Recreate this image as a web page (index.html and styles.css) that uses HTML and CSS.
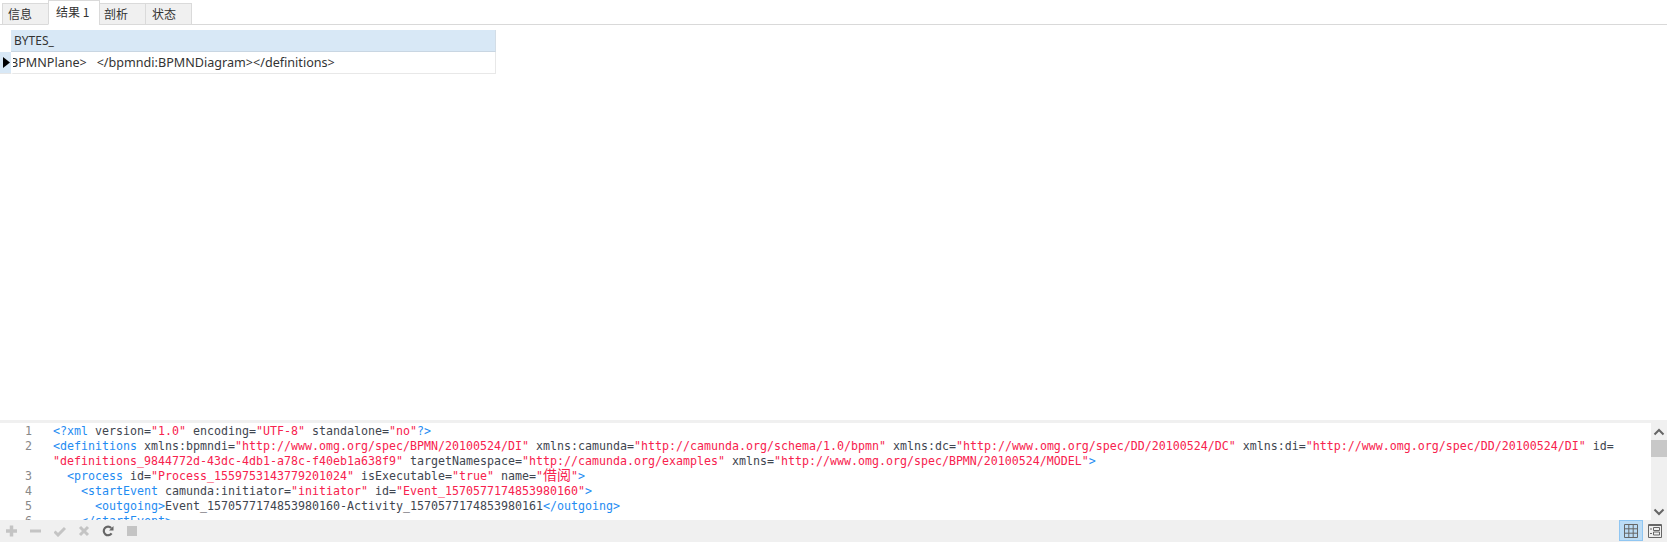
FILE: index.html
```html
<!DOCTYPE html>
<html lang="zh">
<head>
<meta charset="utf-8">
<title>结果 1</title>
<link rel="stylesheet" href="styles.css">
</head>
<body>
<div class="page">
  <nav class="tabs">
    <div class="tab">信息</div>
    <div class="tab active">结果 1</div>
    <div class="tab">剖析</div>
    <div class="tab">状态</div>
  </nav>
  <main class="grid-area">
    <div class="grid-row head">
      <div class="marker"></div>
      <div class="cell">BYTES_</div>
    </div>
    <div class="grid-row body-row">
      <div class="marker current"><svg width="7" height="11" viewBox="0 0 7 11"><path d="M0 0L7 5.5L0 11Z" fill="#000"/></svg></div>
      <div class="cell"><span class="clipped">BPMNPlane&gt;   &lt;/bpmndi:BPMNDiagram&gt;&lt;/definitions&gt;</span></div>
    </div>
  </main>
  <section class="editor">
    <div class="code">
      <div class="line"><span class="num">1</span><span class="src"><span class="t">&lt;?xml</span> version=<span class="s">"1.0"</span> encoding=<span class="s">"UTF-8"</span> standalone=<span class="s">"no"</span><span class="t">?&gt;</span></span></div>
      <div class="line"><span class="num">2</span><span class="src"><span class="t">&lt;definitions</span> xmlns:bpmndi=<span class="s">"http://www.omg.org/spec/BPMN/20100524/DI"</span> xmlns:camunda=<span class="s">"http://camunda.org/schema/1.0/bpmn"</span> xmlns:dc=<span class="s">"http://www.omg.org/spec/DD/20100524/DC"</span> xmlns:di=<span class="s">"http://www.omg.org/spec/DD/20100524/DI"</span> id=<br><span class="s">"definitions_9844772d-43dc-4db1-a78c-f40eb1a638f9"</span> targetNamespace=<span class="s">"http://camunda.org/examples"</span> xmlns=<span class="s">"http://www.omg.org/spec/BPMN/20100524/MODEL"</span><span class="t">&gt;</span></span></div>
      <div class="line"><span class="num">3</span><span class="src">  <span class="t">&lt;process</span> id=<span class="s">"Process_1559753143779201024"</span> isExecutable=<span class="s">"true"</span> name=<span class="s">"<span class="cjk">借阅</span>"</span><span class="t">&gt;</span></span></div>
      <div class="line"><span class="num">4</span><span class="src">    <span class="t">&lt;startEvent</span> camunda:initiator=<span class="s">"initiator"</span> id=<span class="s">"Event_1570577174853980160"</span><span class="t">&gt;</span></span></div>
      <div class="line"><span class="num">5</span><span class="src">      <span class="t">&lt;outgoing&gt;</span>Event_1570577174853980160-Activity_1570577174853980161<span class="t">&lt;/outgoing&gt;</span></span></div>
      <div class="line"><span class="num">6</span><span class="src">    <span class="t">&lt;/startEvent&gt;</span></span></div>
    </div>
    <div class="scrollbar">
      <svg class="arrow" width="12" height="8" viewBox="0 0 12 8"><path d="M1.500 6.500L6 2L10.500 6.500" fill="none" stroke="#666" stroke-width="2"/></svg>
      <div class="thumb"></div>
      <svg class="arrow" width="12" height="8" viewBox="0 0 12 8"><path d="M1.500 1.500L6 6L10.500 1.500" fill="none" stroke="#666" stroke-width="2"/></svg>
    </div>
  </section>
  <footer class="toolbar">
    <div class="tools">
      <svg width="12" height="12" viewBox="0 0 12 12"><path d="M5.500 0.500V11.500M0 6H11" stroke="#c4c4c4" stroke-width="3.500"/></svg>
      <svg width="12" height="12" viewBox="0 0 12 12"><path d="M0 6H11" stroke="#c4c4c4" stroke-width="3"/></svg>
      <svg width="12" height="12" viewBox="0 0 12 12"><path d="M0.500 6.500L4 10L11 3" fill="none" stroke="#c4c4c4" stroke-width="3"/></svg>
      <svg width="12" height="12" viewBox="0 0 12 12"><path d="M2 2L10 10M10 2L2 10" stroke="#c4c4c4" stroke-width="3"/></svg>
      <svg width="12" height="12" viewBox="0 0 12 12"><path d="M9.600 8.400A4.300 4.300 0 1 1 9.200 3" fill="none" stroke="#666" stroke-width="2.200"/><path d="M7 5.500H11.500V1Z" fill="#666"/></svg>
      <svg width="12" height="12" viewBox="0 0 12 12"><rect x="1" y="1" width="10" height="10" fill="#c4c4c4"/></svg>
    </div>
    <div class="views">
      <div class="view selected">
        <svg width="14" height="14" viewBox="0 0 14 14"><path d="M.5.5H13.500V13.500H.5ZM.5 4.800H13.500M.5 9.200H13.500M4.800.5V13.500M9.200.5V13.500" fill="none" stroke="#666"/></svg>
      </div>
      <div class="view narrow">
        <svg width="14" height="14" viewBox="0 0 14 14"><path d="M.5.5H13.500V13.500H.5Z" fill="none" stroke="#666"/><path d="M1 1.500H13M2 5H4M2 9.500H4" stroke="#666" stroke-width="1.200"/><path d="M5.500 3.500H11.500V6.500H5.500ZM5.500 8H11.500V11H5.500Z" fill="none" stroke="#666"/></svg>
      </div>
    </div>
  </footer>
</div>
</body>
</html>
```
FILE: styles.css
```css
* { box-sizing: border-box; }
html, body { margin: 0; padding: 0; height: 100%; background: #fff; overflow: hidden; }
.page {
  height: 100vh;
  display: flex;
  flex-direction: column;
  font-family: "Noto Sans", "Noto Sans CJK SC", sans-serif;
  font-size: 12px;
  color: #333;
}
.tabs {
  height: 25px;
  display: flex;
  align-items: flex-end;
  padding-left: 2px;
  border-bottom: 1px solid #d9d9d9;
  flex: none;
}
.tab {
  width: 47px;
  height: 22px;
  margin-bottom: -1px;
  border: 1px solid #dadada;
  margin-right: -1px;
  padding-left: 5px;
  background: #f0f0f0;
  line-height: 19px;
  font-family: "Noto Sans CJK SC", sans-serif;
}
.tab:nth-child(3) { padding-left: 4px; }
.tab:nth-child(4) { padding-left: 6px; }
.tab.active {
  width: 52px;
  height: 25px;
  padding-left: 7px;
  background: #fff;
  border-bottom-color: #fff;
  line-height: 21px;
}
.grid-area {
  flex: 1;
  padding-top: 5px;
}
.grid-row {
  display: flex;
  width: 496px;
  height: 22px;
}
.marker {
  width: 11px;
  flex: none;
  display: flex;
  align-items: center;
  padding-left: 3px;
}
.marker.current { background: #d8e8f6; border-bottom: 1px solid #e6e6e6; }
.cell {
  flex: 1;
  min-width: 0;
  overflow: hidden;
  white-space: pre;
  line-height: 22px;
  padding-left: 3px;
  border: 1px solid #e8e8e8;
  border-top: 0;
  border-left: 0;
}
.head .cell {
  background: #d8e8f6;
  border-bottom: 1px solid #c9d6e2;
  border-right: 1px solid #d3dde6;
  height: 22px;
}
.body-row .cell {
  padding-left: 0;
  border-left: 2px solid #fff;
  font-size: 12.6px;
}
.clipped { display: inline-block; margin-left: -3px; }
.editor {
  flex: none;
  height: 100px;
  border-top: 3px solid #f0f0f0;
  display: flex;
  overflow: hidden;
}
.code {
  flex: 1;
  min-width: 0;
  padding-top: 1px;
  font-family: "DejaVu Sans Mono", "Noto Sans CJK SC", monospace;
  font-size: 11.63px;
  line-height: 15px;
  color: #3f4650;
  overflow: hidden;
}
.line { display: flex; }
.src { white-space: pre; }
.num {
  width: 32px;
  flex: none;
  text-align: right;
  color: #888;
  margin-right: 21px;
}
.t { color: #1f8cf2; }
.s { color: #f7224e; }
.cjk { font-family: "Noto Sans CJK SC", sans-serif; font-size: 14px; line-height: 0; }
.scrollbar {
  width: 16px;
  flex: none;
  background: #f0f0f0;
  display: flex;
  flex-direction: column;
  align-items: center;
  padding: 5px 0 4px;
}
.arrow { flex: none; }
.thumb {
  align-self: stretch;
  height: 17px;
  margin-top: 4px;
  margin-bottom: auto;
  background: #c8c8c8;
}
.toolbar {
  flex: none;
  height: 22px;
  background: #f0f0f0;
  display: flex;
  justify-content: space-between;
  align-items: stretch;
}
.tools {
  display: flex;
  align-items: center;
  gap: 12px;
  padding-left: 6px;
}
.views {
  display: flex;
  align-items: stretch;
  padding-right: 2px;
  padding-bottom: 1px;
  gap: 2px;
}
.view {
  width: 24px;
  display: flex;
  align-items: center;
  justify-content: center;
  border: 1px solid transparent;
}
.view.narrow { width: 20px; }
.view.selected { background: #bcdcf5; border-color: #90c6f2; }
```
